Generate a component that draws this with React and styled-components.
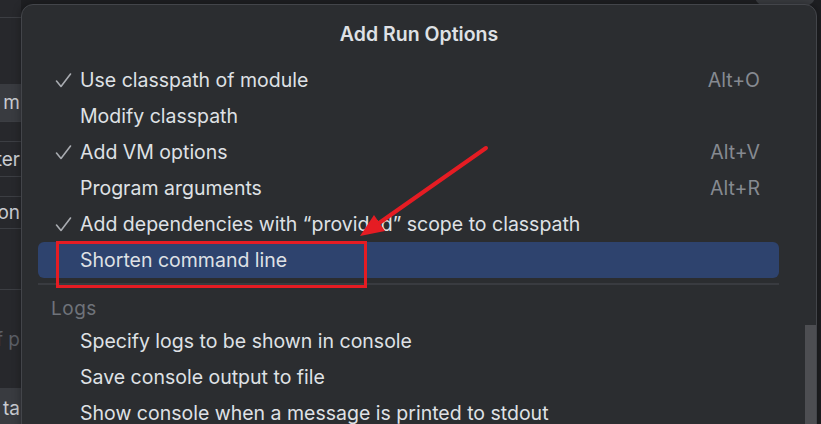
import styled, { createGlobalStyle } from 'styled-components';

const GlobalStyle = createGlobalStyle`
  html, body {
    margin: 0;
    padding: 0;
    background: #1e1f22;
  }
  body {
    font-family: Inter, "Noto Sans", sans-serif;
    -webkit-font-smoothing: antialiased;
  }
`;

const runOptions = [
  { label: 'Use classpath of module', checked: true, shortcut: 'Alt+O' },
  { label: 'Modify classpath' },
  { label: 'Add VM options', checked: true, shortcut: 'Alt+V' },
  { label: 'Program arguments', shortcut: 'Alt+R' },
  { label: 'Add dependencies with “provided” scope to classpath', checked: true },
  { label: 'Shorten command line', selected: true },
];

const logOptions = [
  'Specify logs to be shown in console',
  'Save console output to file',
  'Show console when a message is printed to stdout',
];

const CheckIcon = () => (
  <svg width="17" height="17" viewBox="0 0 17 17">
    <path
      d="M1.5 9 L6 14.5 L15.5 2"
      fill="none"
      stroke="#a8abb0"
      strokeWidth="1.6"
      strokeLinecap="round"
      strokeLinejoin="round"
    />
  </svg>
);

const App = () => {
  return (
    <>
      <GlobalStyle />
      <Page>
        <SideStrip>
          <StripCell $h={18} $line />
          <StripCell $h={66} />
          <StripCell $h={38} $field $line>m ⌄</StripCell>
          <StripCell $h={20} $line />
          <StripCell $h={35} $line>ter</StripCell>
          <StripCell $h={20} $line />
          <StripCell $h={32} $line>on</StripCell>
          <StripCell $h={61} $line />
          <StripCell $h={98} $dim>f p</StripCell>
          <StripCell $h={40} $field>ta</StripCell>
        </SideStrip>

        <Popup>
          <Title>Add Run Options</Title>
          <Body>
            <List>
              {runOptions.map(opt => (
                <Row key={opt.label} $selected={opt.selected}>
                  <Check>{opt.checked && <CheckIcon />}</Check>
                  <Label>{opt.label}</Label>
                  {opt.shortcut && <Shortcut>{opt.shortcut}</Shortcut>}
                </Row>
              ))}
              <Separator />
              <GroupHeader>Logs</GroupHeader>
              {logOptions.map(label => (
                <Row key={label}>
                  <Check />
                  <Label>{label}</Label>
                </Row>
              ))}
            </List>
            <ScrollTrack>
              <ScrollThumb />
            </ScrollTrack>
          </Body>
        </Popup>

        <BackCorner />

        <Annotation viewBox="0 0 821 424" width="821" height="424">
          <rect
            x="57.5"
            y="242.5"
            width="308"
            height="44"
            fill="none"
            stroke="#e51c23"
            strokeWidth="3"
          />
          <line
            x1="486"
            y1="148"
            x2="372"
            y2="228"
            stroke="#e51c23"
            strokeWidth="4"
            strokeLinecap="round"
          />
          <polygon points="360,236 374,215 385,231" fill="#e51c23" />
        </Annotation>
      </Page>
    </>
  );
};

const Page = styled.div`
  position: relative;
  display: flex;
  align-items: flex-start;
  width: 821px;
  height: 424px;
  overflow: hidden;
  background: #1e1f22;
`;

const SideStrip = styled.div`
  display: flex;
  flex-direction: column;
  width: 21px;
  flex-shrink: 0;
  height: 100%;
  background: #27282c;
  overflow: hidden;
`;

const StripCell = styled.div`
  height: ${p => p.$h}px;
  flex-shrink: 0;
  display: flex;
  align-items: center;
  white-space: nowrap;
  font-size: 19px;
  color: ${p => (p.$dim ? '#5c5f66' : '#c9ccd1')};
  background: ${p => (p.$field ? '#393b40' : 'transparent')};
  border-bottom: ${p => (p.$line ? '1px solid #3c3e43' : 'none')};
  box-sizing: border-box;
  direction: rtl;
  padding-right: 1px;
  overflow: hidden;
`;

const Popup = styled.div`
  width: 796px;
  height: 440px;
  margin-top: 4px;
  flex-shrink: 0;
  box-sizing: border-box;
  background: #2b2d30;
  border: 1px solid #43454a;
  border-radius: 12px;
  display: flex;
  flex-direction: column;
  box-shadow: 0 0 8px rgba(0, 0, 0, 0.35);
  position: relative;
  z-index: 1;
  overflow: hidden;
`;

const Title = styled.div`
  height: 57px;
  flex-shrink: 0;
  display: flex;
  align-items: center;
  justify-content: center;
  box-sizing: border-box;
  font-size: 19.5px;
  font-weight: 600;
  color: #dfe1e5;
`;

const Body = styled.div`
  display: flex;
  padding-left: 16px;
  flex: 1;
  min-height: 0;
  overflow: hidden;
`;

const List = styled.div`
  width: 741px;
  flex-shrink: 0;
  display: flex;
  flex-direction: column;
`;

const Row = styled.div`
  height: 36px;
  flex-shrink: 0;
  display: flex;
  align-items: center;
  padding: 0 19px 0 17px;
  border-radius: 6px;
  background: ${p => (p.$selected ? '#2e436e' : 'transparent')};
  font-size: 19.5px;
  color: #dfe1e5;
  white-space: nowrap;
`;

const Check = styled.span`
  width: 25px;
  height: 17px;
  flex-shrink: 0;
  display: flex;
  align-items: center;
`;

const Label = styled.span`
  flex: 1;
`;

const Shortcut = styled.span`
  color: #868a91;
`;

const Separator = styled.div`
  height: 2px;
  flex-shrink: 0;
  margin: 5px 0 0;
  background: #393b40;
`;

const GroupHeader = styled.div`
  height: 38px;
  flex-shrink: 0;
  display: flex;
  align-items: center;
  padding: 8px 0 0 13px;
  box-sizing: border-box;
  font-size: 19px;
  letter-spacing: 0.5px;
  color: #6f737a;
`;

const ScrollTrack = styled.div`
  margin-left: auto;
  width: 11px;
  display: flex;
  flex-direction: column;
`;

const ScrollThumb = styled.div`
  margin-top: 263px;
  height: 120px;
  flex-shrink: 0;
  background: #4d4e52;
`;

const BackCorner = styled.div`
  position: absolute;
  top: -14px;
  right: 6px;
  width: 60px;
  height: 20px;
  border-radius: 12px;
  background: #3a3c40;
`;

const Annotation = styled.svg`
  position: absolute;
  left: 0;
  top: 0;
  z-index: 2;
  pointer-events: none;
`;

export default App;
